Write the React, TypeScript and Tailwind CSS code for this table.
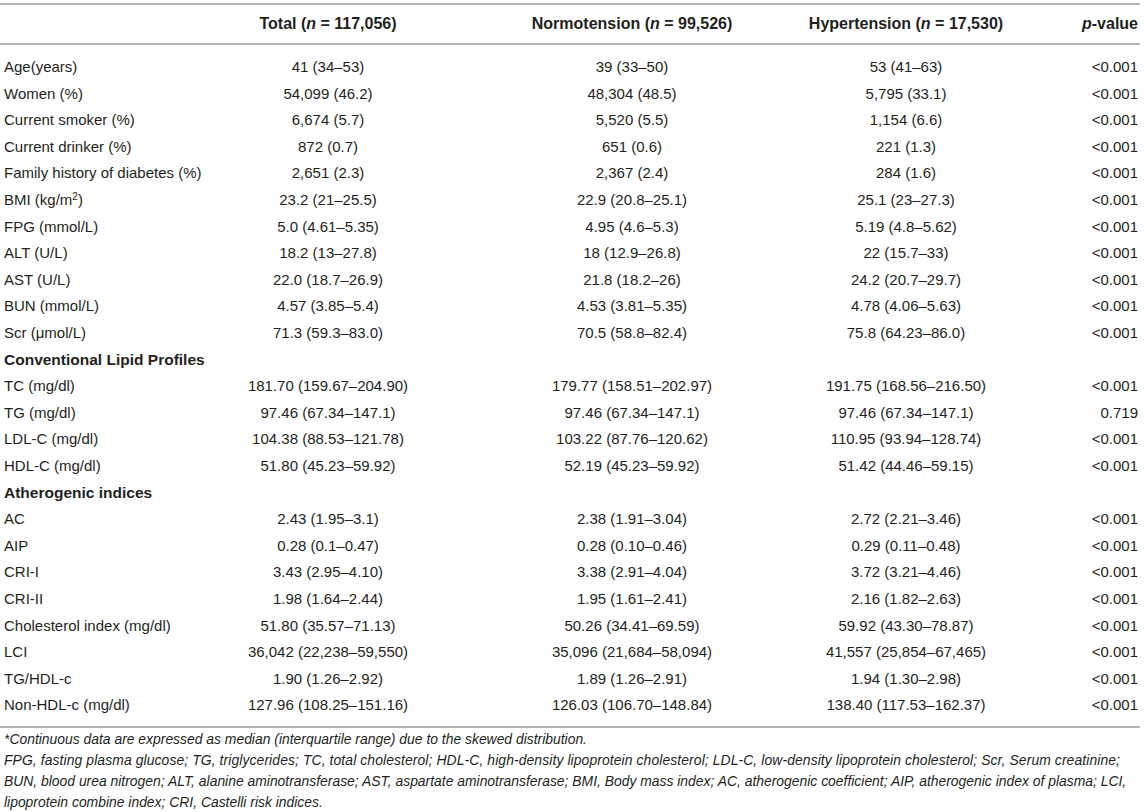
const rows: { label: React.ReactNode; total?: string; normo?: string; hyper?: string; p?: string; section?: boolean }[] = [
  { label: 'Age(years)', total: '41 (34–53)', normo: '39 (33–50)', hyper: '53 (41–63)', p: '<0.001' },
  { label: 'Women (%)', total: '54,099 (46.2)', normo: '48,304 (48.5)', hyper: '5,795 (33.1)', p: '<0.001' },
  { label: 'Current smoker (%)', total: '6,674 (5.7)', normo: '5,520 (5.5)', hyper: '1,154 (6.6)', p: '<0.001' },
  { label: 'Current drinker (%)', total: '872 (0.7)', normo: '651 (0.6)', hyper: '221 (1.3)', p: '<0.001' },
  { label: 'Family history of diabetes (%)', total: '2,651 (2.3)', normo: '2,367 (2.4)', hyper: '284 (1.6)', p: '<0.001' },
  {
    label: (
      <>
        BMI (kg/m<sup className="text-[10px]">2</sup>)
      </>
    ),
    total: '23.2 (21–25.5)',
    normo: '22.9 (20.8–25.1)',
    hyper: '25.1 (23–27.3)',
    p: '<0.001',
  },
  { label: 'FPG (mmol/L)', total: '5.0 (4.61–5.35)', normo: '4.95 (4.6–5.3)', hyper: '5.19 (4.8–5.62)', p: '<0.001' },
  { label: 'ALT (U/L)', total: '18.2 (13–27.8)', normo: '18 (12.9–26.8)', hyper: '22 (15.7–33)', p: '<0.001' },
  { label: 'AST (U/L)', total: '22.0 (18.7–26.9)', normo: '21.8 (18.2–26)', hyper: '24.2 (20.7–29.7)', p: '<0.001' },
  { label: 'BUN (mmol/L)', total: '4.57 (3.85–5.4)', normo: '4.53 (3.81–5.35)', hyper: '4.78 (4.06–5.63)', p: '<0.001' },
  { label: 'Scr (μmol/L)', total: '71.3 (59.3–83.0)', normo: '70.5 (58.8–82.4)', hyper: '75.8 (64.23–86.0)', p: '<0.001' },
  { label: 'Conventional Lipid Profiles', section: true },
  { label: 'TC (mg/dl)', total: '181.70 (159.67–204.90)', normo: '179.77 (158.51–202.97)', hyper: '191.75 (168.56–216.50)', p: '<0.001' },
  { label: 'TG (mg/dl)', total: '97.46 (67.34–147.1)', normo: '97.46 (67.34–147.1)', hyper: '97.46 (67.34–147.1)', p: '0.719' },
  { label: 'LDL-C (mg/dl)', total: '104.38 (88.53–121.78)', normo: '103.22 (87.76–120.62)', hyper: '110.95 (93.94–128.74)', p: '<0.001' },
  { label: 'HDL-C (mg/dl)', total: '51.80 (45.23–59.92)', normo: '52.19 (45.23–59.92)', hyper: '51.42 (44.46–59.15)', p: '<0.001' },
  { label: 'Atherogenic indices', section: true },
  { label: 'AC', total: '2.43 (1.95–3.1)', normo: '2.38 (1.91–3.04)', hyper: '2.72 (2.21–3.46)', p: '<0.001' },
  { label: 'AIP', total: '0.28 (0.1–0.47)', normo: '0.28 (0.10–0.46)', hyper: '0.29 (0.11–0.48)', p: '<0.001' },
  { label: 'CRI-I', total: '3.43 (2.95–4.10)', normo: '3.38 (2.91–4.04)', hyper: '3.72 (3.21–4.46)', p: '<0.001' },
  { label: 'CRI-II', total: '1.98 (1.64–2.44)', normo: '1.95 (1.61–2.41)', hyper: '2.16 (1.82–2.63)', p: '<0.001' },
  { label: 'Cholesterol index (mg/dl)', total: '51.80 (35.57–71.13)', normo: '50.26 (34.41–69.59)', hyper: '59.92 (43.30–78.87)', p: '<0.001' },
  { label: 'LCI', total: '36,042 (22,238–59,550)', normo: '35,096 (21,684–58,094)', hyper: '41,557 (25,854–67,465)', p: '<0.001' },
  { label: 'TG/HDL-c', total: '1.90 (1.26–2.92)', normo: '1.89 (1.26–2.91)', hyper: '1.94 (1.30–2.98)', p: '<0.001' },
  { label: 'Non-HDL-c (mg/dl)', total: '127.96 (108.25–151.16)', normo: '126.03 (106.70–148.84)', hyper: '138.40 (117.53–162.37)', p: '<0.001' },
];

export default function App() {
  return (
    <div className="w-[1146px] h-[812px] overflow-hidden bg-white pt-[3px] text-[#231f20] font-['Liberation_Sans',Arial,sans-serif] text-[15px]">
      <table className="w-[1140px] table-fixed border-collapse">
        <colgroup>
          <col className="w-[200px]" />
          <col className="w-[256px]" />
          <col className="w-[352px]" />
          <col className="w-[196px]" />
          <col className="w-[136px]" />
        </colgroup>
        <thead>
          <tr className="h-[40px] border-y-2 border-[#b4b4b4] font-bold text-[16px]">
            <th />
            <th className="text-center whitespace-nowrap">
              Total (<i>n</i> = 117,056)
            </th>
            <th className="text-center whitespace-nowrap">
              Normotension (<i>n</i> = 99,526)
            </th>
            <th className="text-center whitespace-nowrap">
              Hypertension (<i>n</i> = 17,530)
            </th>
            <th className="text-right pr-[2px] whitespace-nowrap">
              <i>p</i>-value
            </th>
          </tr>
        </thead>
        <tbody className="border-b-2 border-[#b4b4b4]">
          <tr className="h-[10px]">
            <td colSpan={5} />
          </tr>
          {rows.map((r, i) => (
            <tr key={i} className="h-[26.6px]">
              <td className={`pl-[4px] whitespace-nowrap ${r.section ? 'font-bold text-[15.5px]' : ''}`}>{r.label}</td>
              <td className="text-center whitespace-nowrap">{r.total}</td>
              <td className="text-center whitespace-nowrap">{r.normo}</td>
              <td className="text-center whitespace-nowrap">{r.hyper}</td>
              <td className="text-right pr-[2px] whitespace-nowrap">{r.p}</td>
            </tr>
          ))}
          <tr className="h-[8px]">
            <td colSpan={5} />
          </tr>
        </tbody>
      </table>
      <div className="pl-[4px] pt-[1px] italic text-[13.9px] leading-[21px]">
        <p className="whitespace-nowrap">*Continuous data are expressed as median (interquartile range) due to the skewed distribution.</p>
        <p className="whitespace-nowrap tracking-[0.1px]">
          FPG, fasting plasma glucose; TG, triglycerides; TC, total cholesterol; HDL-C, high-density lipoprotein cholesterol; LDL-C, low-density lipoprotein cholesterol; Scr, Serum creatinine;
        </p>
        <p className="whitespace-nowrap">
          BUN, blood urea nitrogen; ALT, alanine aminotransferase; AST, aspartate aminotransferase; BMI, Body mass index; AC, atherogenic coefficient; AIP, atherogenic index of plasma; LCI,
        </p>
        <p className="whitespace-nowrap">lipoprotein combine index; CRI, Castelli risk indices.</p>
      </div>
    </div>
  );
}
